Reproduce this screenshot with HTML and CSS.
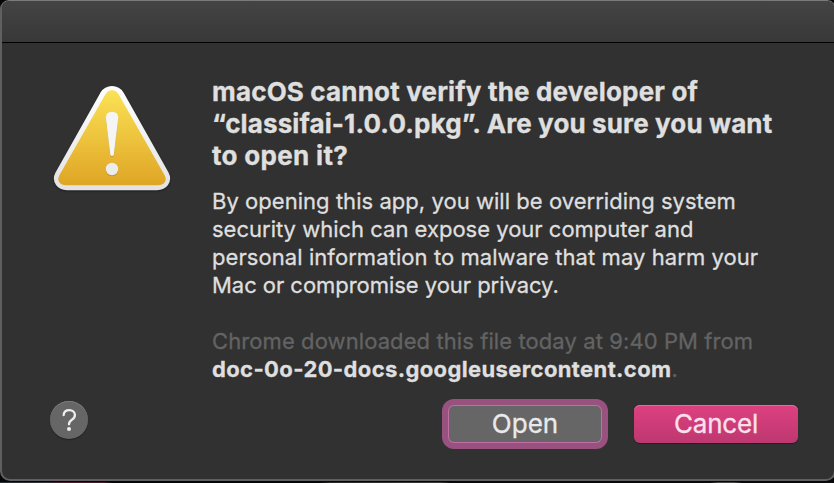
FILE: index.html
```html
<!DOCTYPE html>
<html lang="en">
<head>
<meta charset="utf-8">
<title>Verify developer</title>
<link rel="stylesheet" href="styles.css">
</head>
<body>
<main class="dialog">
  <header class="titlebar"></header>
  <div class="content">
    <svg class="warning" width="126" height="114" viewBox="0 0 126 114">
      <defs>
        <linearGradient id="edge" x1="0" y1="0" x2="0" y2="1"><stop offset="0" stop-color="#fff"/><stop offset="1" stop-color="#e2e2e3"/></linearGradient>
        <linearGradient id="gold" x1="0" y1="0" x2="0" y2="1"><stop offset="0" stop-color="#fbe254"/><stop offset="1" stop-color="#dfa525"/></linearGradient>
      </defs>
      <path class="rim" fill="url(#edge)" d="M51.500 11.500Q55.500 5 63 5Q70.500 5 74.500 11.500L119.500 91.500Q123 98 119 104Q115.500 109 108 109.300H18Q10.500 109 7 104Q3 98 6.500 91.500Z"/>
      <path fill="url(#gold)" d="M56 14Q58.500 9.200 63 9.200Q67.500 9.200 70 14L115.500 94Q118 98.500 115.500 101.500Q113.500 104.300 109 104.300H17Q12.500 104.300 10.500 101.500Q8 98.500 10.500 94Z"/>
      <g class="mark"><path fill="#f5f5f5" d="M56.800 37Q56.800 30.800 63 30.800Q69.300 30.800 69.300 37L64.800 73.500Q64.600 75 63 75Q61.500 75 61.300 73.500Z"/><circle cx="63" cy="88" r="6.200" fill="#ececec"/></g>
    </svg>
    <section class="message">
      <h1><span class="h-a">macOS cannot verify the developer of</span><br><span class="h-b">“classifai-1.0.0.pkg”. Are you sure you want</span><br><span class="h-c">to open it?</span></h1>
      <p><span class="b-a">By opening this app, you will be overriding system</span><br><span class="b-b">security which can expose your computer and</span><br><span class="b-c">personal information to malware that may harm your</span><br><span class="b-d">Mac or compromise your privacy.</span></p>
      <p class="source"><span class="b-e">Chrome downloaded this file today at 9:40 PM from</span><br><strong>doc-0o-20-docs.googleusercontent.com</strong>.</p>
    </section>
  </div>
  <footer class="actions">
    <button class="help" aria-label="Help"><svg width="38" height="38" viewBox="0 0 38 38"><path d="M13.700 14C13.900 11 16 9.200 19.300 9.200C22.700 9.200 24.900 11.200 24.900 14C24.900 16.200 23.900 17.500 21.900 18.700C19.800 20 19 20.900 19 23.300" fill="none" stroke="#eee" stroke-width="2.300" stroke-linecap="round"/><circle cx="19" cy="28" r="2" fill="#eee"/></svg></button>
    <button class="button open"><span>Open</span></button>
    <button class="button cancel"><span>Cancel</span></button>
  </footer>
</main>
</body>
</html>
```
FILE: styles.css
```css
* { box-sizing: border-box; }
body { margin: 0; height: 483px; overflow: hidden; background: #050608 linear-gradient(90deg, #283039, #33333a 50px, #501c31 58px, #43182a 104px, #050608 112px, #050608 320px, #292929 330px, #393939 440px, #0a0a0c 450px, #0a0a0c 710px, #444 718px, #444 734px, #0a0a0c 742px) 0 482px / 100% 1px no-repeat; font-family: Inter, sans-serif; }
.dialog { width: 836px; height: 481px; border: 2px solid #606060; border-top: 1px solid #7b7b7b; border-radius: 9px 9px 10px 10px; background: #313131; overflow: hidden; }
.titlebar { height: 42px; background: linear-gradient(#444, #383838); border-bottom: 1px solid #000; }
.content { display: flex; height: 358px; padding: 33px 0 0 47px; }
.warning { flex: none; margin-top: 5px; }
.rim { filter: drop-shadow(0 1px 1px #0006); }
.mark { filter: drop-shadow(0 1px 0 #a9852f99); }
.message { margin-left: 37px; color: #dfdfdf; white-space: nowrap; }
h1 { margin: 0; font-size: 26px; font-weight: 700; line-height: 32px; -webkit-text-stroke: .35px; }
p { margin: 15px 0 0; font-size: 22px; line-height: 28px; -webkit-text-stroke: .3px; }
.h-a { letter-spacing: .17px; }
.h-b { letter-spacing: .12px; }
.h-c { letter-spacing: .32px; }
.b-a { letter-spacing: .04px; }
.b-c { letter-spacing: .07px; }
.b-d { letter-spacing: -.04px; }
.b-e { letter-spacing: .09px; }
.source { margin-top: 28px; color: #636363; }
.source strong { color: #dfdfdf; font-weight: 700; letter-spacing: .38px; }
.actions { display: flex; align-items: flex-start; padding-left: 48px; }
button { border: 0; padding: 0; font-family: inherit; }
.help { width: 38px; height: 38px; border-radius: 50%; background: #666; box-shadow: inset 0 1px #7b7b7b, 0 1px 1px #0005; }
.help svg { display: block; }
.button { height: 38px; margin-top: 4px; border-radius: 6px; font-size: 26px; line-height: 38px; -webkit-text-stroke: .3px; }
.open { width: 154px; margin-left: 360px; color: #eaeaea; background: #666; box-shadow: inset 0 0 0 1px #c16fa4, 0 0 0 6px #99527f; }
.cancel { width: 164px; margin-left: 32px; color: #fbe0ec; letter-spacing: -.2px; background: linear-gradient(#de4080, #bd3870); box-shadow: inset 0 1px #e66d9d, 0 1px 1px #0006; }
```
